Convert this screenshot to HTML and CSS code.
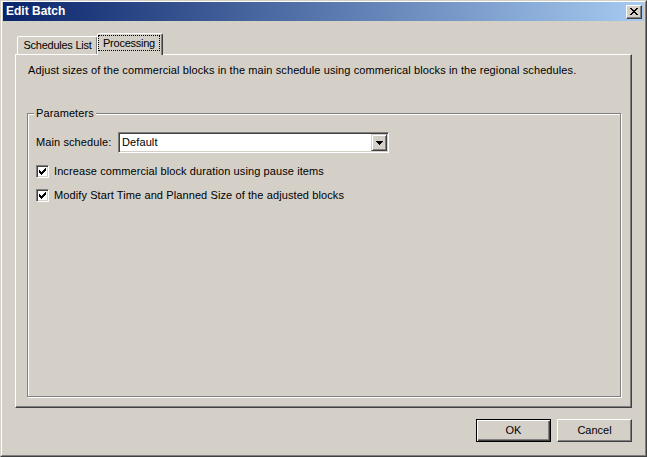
FILE: index.html
```html
<!DOCTYPE html>
<html>
<head>
<meta charset="utf-8">
<title>Edit Batch</title>
<link rel="stylesheet" href="styles.css">
</head>
<body>
<div class="window">
  <div class="frame">
    <div class="titlebar">
      <span class="title">Edit Batch</span>
      <button class="close" aria-label="Close">
        <svg width="8" height="7" viewBox="0 0 8 7" shape-rendering="crispEdges"><path d="M0 0h2v1h-2z M6 0h2v1h-2z M1 1h2v1h-2z M5 1h2v1h-2z M2 2h4v1h-4z M3 3h2v1h-2z M2 4h4v1h-4z M1 5h2v1h-2z M5 5h2v1h-2z M0 6h2v1h-2z M6 6h2v1h-2z" fill="#000"/></svg>
      </button>
    </div>
    <div class="body">
      <div class="tabs">
        <div class="tab">Schedules List</div>
        <div class="tab active"><span class="focus">Processing</span></div>
      </div>
      <div class="panel">
        <p class="desc">Adjust sizes of the commercial blocks in the main schedule using commerical blocks in the regional schedules.</p>
        <fieldset class="group">
          <legend class="legend">Parameters</legend>
          <div class="row">
            <span class="lbl">Main schedule:</span>
            <div class="combo">
              <span class="combo-text">Default</span>
              <span class="combo-btn">
                <svg width="7" height="4" viewBox="0 0 7 4" shape-rendering="crispEdges"><path d="M0 0h7v1h-7z M1 1h5v1h-5z M2 2h3v1h-3z M3 3h1v1h-1z" fill="#000"/></svg>
              </span>
            </div>
          </div>
          <div class="checks">
            <div class="check">
              <span class="cb"><svg width="11" height="11" viewBox="0 0 11 11" shape-rendering="crispEdges"><path d="M2 4h1v3h-1z M3 5h1v3h-1z M4 6h1v3h-1z M5 5h1v3h-1z M6 4h1v3h-1z M7 3h1v3h-1z M8 2h1v3h-1z" fill="#000"/></svg></span>
              <span>Increase commercial block duration using pause items</span>
            </div>
            <div class="check">
              <span class="cb"><svg width="11" height="11" viewBox="0 0 11 11" shape-rendering="crispEdges"><path d="M2 4h1v3h-1z M3 5h1v3h-1z M4 6h1v3h-1z M5 5h1v3h-1z M6 4h1v3h-1z M7 3h1v3h-1z M8 2h1v3h-1z" fill="#000"/></svg></span>
              <span>Modify Start Time and Planned Size of the adjusted blocks</span>
            </div>
          </div>
        </fieldset>
      </div>
      <div class="buttons">
        <button class="btn default">OK</button>
        <button class="btn">Cancel</button>
      </div>
    </div>
  </div>
</div>
</body>
</html>
```

FILE: styles.css
```css
* { box-sizing: border-box; }

html, body {
  margin: 0;
  background: #d4d0c8;
}

body {
  font-family: "Liberation Sans", Arial, sans-serif;
  font-size: 11px;
  line-height: 13px;
  letter-spacing: 0.1px;
  color: #000;
}

.window {
  width: 647px;
  height: 457px;
  border: 1px solid;
  border-color: #d4d0c8 #404040 #404040 #d4d0c8;
}

.frame {
  height: 100%;
  border: 1px solid;
  border-color: #fff #808080 #808080 #fff;
  padding: 0 1px 1px;
  display: flex;
  flex-direction: column;
}

.titlebar {
  flex: none;
  height: 19px;
  display: flex;
  align-items: center;
  justify-content: space-between;
  padding: 0 2px 0 3px;
  background: linear-gradient(to right, #0a246a, #a6caf0);
}

.title {
  color: #fff;
  font-weight: bold;
  font-size: 12px;
  letter-spacing: 0;
}

.close {
  width: 16px;
  height: 14px;
  padding: 0;
  margin: 0;
  background: #d4d0c8;
  border: 1px solid;
  border-color: #fff #404040 #404040 #fff;
  box-shadow: inset -1px -1px #808080;
  display: flex;
  align-items: center;
  justify-content: center;
}

.close svg { display: block; margin-left: -1px; }

.body {
  flex: 1;
  display: flex;
  flex-direction: column;
  padding: 12px;
}

.tabs {
  flex: none;
  height: 21px;
  display: flex;
  align-items: flex-end;
  padding-left: 2px;
}

.tab {
  width: 81px;
  height: 18px;
  padding: 0 0 1px 0;
  display: flex;
  align-items: center;
  justify-content: center;
  letter-spacing: -0.25px;
  border: 1px solid;
  border-bottom: none;
  border-color: #fff #404040 transparent #fff;
  box-shadow: inset -1px 0 #808080;
  border-top-left-radius: 2px;
  border-top-right-radius: 2px;
  background: #d4d0c8;
}

.tab.active {
  width: 66px;
  height: 22px;
  margin-left: -1px;
  margin-bottom: -1px;
  padding: 0 0 3px 0;
  position: relative;
  z-index: 1;
}

.focus {
  width: 60px;
  text-align: center;
  padding-top: 1px;
  margin-left: -2px;
  outline: 1px dotted #000;
  outline-offset: 0;
}

.panel {
  flex: 1;
  display: flex;
  flex-direction: column;
  border: 1px solid;
  border-color: #fff #404040 #404040 #fff;
  box-shadow: inset -1px -1px #808080;
  padding: 9px 10px 10px 11px;
}

.desc {
  margin: 0 0 0 1px;
}

.group {
  flex: 1;
  margin: 30px 0 0 0;
  min-width: 0;
  padding: 0 8px;
  border: 1px solid #808080;
  box-shadow: 1px 1px 0 #fff, inset 1px 1px 0 #fff;
}

.legend {
  padding: 0 2px;
  margin-left: -2px;
  background: #d4d0c8;
}

.row {
  display: flex;
  align-items: center;
  height: 21px;
  margin-top: 12px;
}

.lbl {
  width: 82px;
  flex: none;
}

.combo {
  width: 271px;
  height: 21px;
  display: flex;
  align-items: center;
  padding: 1px 1px 1px 3px;
  background: #fff;
  border: 1px solid;
  border-color: #808080 #fff #fff #808080;
  box-shadow: inset 1px 1px #404040, inset -1px -1px #d4d0c8;
}

.combo-text { flex: 1; }

.combo-btn {
  width: 16px;
  height: 17px;
  display: flex;
  align-items: center;
  justify-content: center;
  background: #d4d0c8;
  border: 1px solid;
  border-color: #d4d0c8 #404040 #404040 #d4d0c8;
  box-shadow: inset 1px 1px #fff, inset -1px -1px #808080;
}

.combo-btn svg { display: block; }

.checks {
  display: flex;
  flex-direction: column;
  gap: 11px;
  margin-top: 12px;
}

.check {
  display: flex;
  align-items: center;
  gap: 5px;
  height: 13px;
}

.cb {
  width: 13px;
  height: 13px;
  flex: none;
  background: #fff;
  border: 1px solid;
  border-color: #808080 #fff #fff #808080;
  box-shadow: inset 1px 1px #404040, inset -1px -1px #d4d0c8;
}

.cb svg { display: block; }

.buttons {
  flex: none;
  display: flex;
  justify-content: flex-end;
  gap: 6px;
  margin-top: 11px;
}

.btn {
  width: 75px;
  height: 23px;
  padding: 0;
  margin: 0;
  font: inherit;
  color: #000;
  background: #d4d0c8;
  border: 1px solid;
  border-color: #fff #404040 #404040 #fff;
  box-shadow: inset -1px -1px #808080;
}

.btn.default {
  border-color: #000;
  box-shadow: inset 1px 1px #fff, inset -1px -1px #404040, inset -2px -2px #808080;
}
```
